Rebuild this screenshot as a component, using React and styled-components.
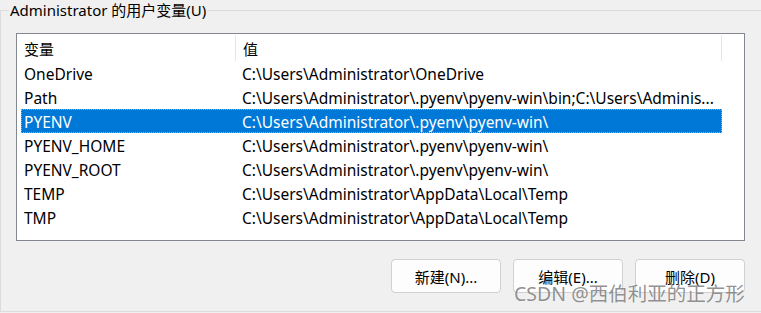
import styled, { createGlobalStyle } from "styled-components";

const GlobalStyle = createGlobalStyle`
  html, body {
    margin: 0;
    padding: 0;
    background: #f0f0f0;
  }
  body {
    width: 761px;
    height: 313px;
    overflow: hidden;
    font-family: "Noto Sans", "Noto Sans CJK SC", sans-serif;
    font-size: 15.5px;
    color: #000;
  }
`;

const variables = [
  { name: "OneDrive", value: "C:\\Users\\Administrator\\OneDrive" },
  {
    name: "Path",
    value: "C:\\Users\\Administrator\\.pyenv\\pyenv-win\\bin;C:\\Users\\Adminis...",
  },
  { name: "PYENV", value: "C:\\Users\\Administrator\\.pyenv\\pyenv-win\\", selected: true },
  { name: "PYENV_HOME", value: "C:\\Users\\Administrator\\.pyenv\\pyenv-win\\" },
  { name: "PYENV_ROOT", value: "C:\\Users\\Administrator\\.pyenv\\pyenv-win\\" },
  { name: "TEMP", value: "C:\\Users\\Administrator\\AppData\\Local\\Temp" },
  { name: "TMP", value: "C:\\Users\\Administrator\\AppData\\Local\\Temp" },
];

function App() {
  return (
    <>
      <GlobalStyle />
      <Page>
        <Group>
          <Legend>Administrator 的用户变量(U)</Legend>
          <ListBox>
            <Header>
              <HeaderCell width="219px">变量</HeaderCell>
              <HeaderCell width="486px">值</HeaderCell>
              <HeaderCell width="auto" />
            </Header>
            {variables.map((v) => (
              <Row key={v.name} selected={v.selected}>
                <Cell>{v.name}</Cell>
                <Cell>{v.value}</Cell>
              </Row>
            ))}
          </ListBox>
          <Buttons>
            <Button>新建(N)...</Button>
            <Button>编辑(E)...</Button>
            <Button>删除(D)</Button>
          </Buttons>
        </Group>
        <Watermark>CSDN @西伯利亚的正方形</Watermark>
      </Page>
    </>
  );
}

export default App;

const Page = styled.div`
  position: relative;
  width: 761px;
  height: 313px;
  overflow: hidden;
`;

const Group = styled.fieldset`
  box-sizing: border-box;
  margin: 0;
  padding: 0 0 0 15px;
  width: 761px;
  height: 312px;
  border: 1px solid #dcdcdc;
  border-right: none;
  min-inline-size: 0;
`;

const Legend = styled.legend`
  margin-left: -7px;
  padding: 0 1px;
  font-size: 15px;
  line-height: 20px;
  color: #000;
`;

const ListBox = styled.div`
  box-sizing: border-box;
  margin-top: 13px;
  width: 729px;
  height: 208px;
  border: 1px solid #828790;
  background: #fff;
`;

const Header = styled.div`
  display: flex;
  height: 27px;
`;

const HeaderCell = styled.div`
  box-sizing: border-box;
  width: ${(p) => p.width};
  flex: ${(p) => (p.width === "auto" ? "1" : "none")};
  padding-left: 7px;
  display: flex;
  align-items: center;
  border-right: 1px solid #e5e5e5;
  margin: 1px 0 0;
  font-size: 15px;
  &:last-child {
    border-right: none;
  }
`;

const Row = styled.div`
  box-sizing: border-box;
  display: grid;
  grid-template-columns: 218px 1fr;
  margin-left: 4px;
  width: 701px;
  height: 24px;
  padding-left: 2px;
  align-items: center;
  white-space: nowrap;
  background: ${(p) => (p.selected ? "#0078d7" : "transparent")};
  color: ${(p) => (p.selected ? "#fff" : "#000")};
  border: 1px dotted ${(p) => (p.selected ? "#f7a21b" : "transparent")};
`;

const Cell = styled.div`
  overflow: hidden;
  line-height: 22px;
  padding-top: 1px;
`;

const Buttons = styled.div`
  display: flex;
  justify-content: flex-end;
  gap: 12px;
  width: 729px;
  margin-top: 18px;
`;

const Button = styled.button`
  box-sizing: border-box;
  width: 110px;
  height: 34px;
  border: 1px solid #d0d0d0;
  border-radius: 4px;
  background: #fdfdfd;
  font-family: inherit;
  font-size: 15px;
  color: #000;
  padding: 0;
`;

const Watermark = styled.div`
  position: absolute;
  left: 514px;
  top: 281px;
  font-size: 19.5px;
  line-height: 26px;
  color: rgba(110, 110, 110, 0.75);
  text-shadow: 0 0 2px rgba(255, 255, 255, 0.6);
  white-space: nowrap;
  pointer-events: none;
`;
